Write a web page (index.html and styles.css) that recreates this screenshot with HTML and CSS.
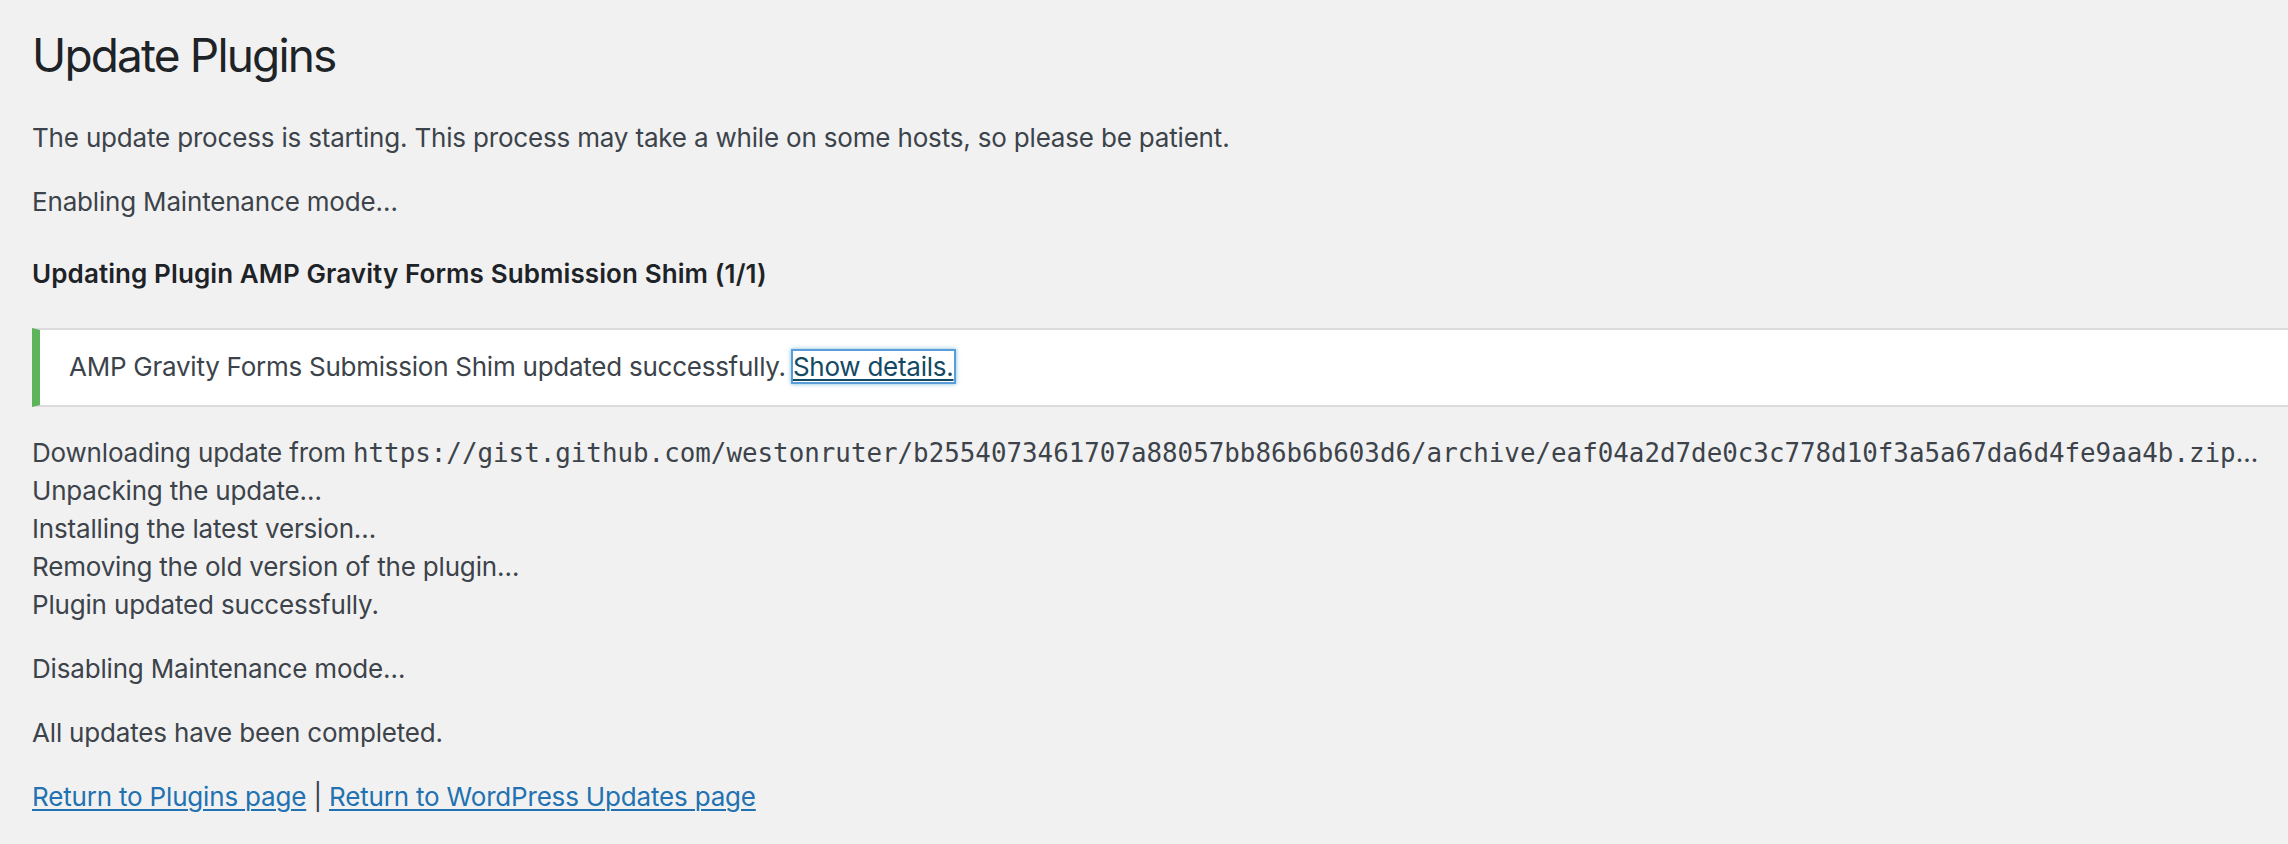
FILE: index.html
```html
<!DOCTYPE html>
<html lang="en">
<head>
  <meta charset="UTF-8">
  <meta name="viewport" content="width=device-width, initial-scale=1.0">
  <title>Update Plugins</title>
  <link rel="stylesheet" href="styles.css">
</head>
<body>
  <div class="wrap">
    <h1>Update Plugins</h1>
    <p>The update process is starting. This process may take a while on some hosts, so please be patient.</p>

    <p>Enabling Maintenance mode&hellip;</p>
    <h2 class="update-title">Updating Plugin AMP Gravity Forms Submission Shim (1/1)</h2>

    <div class="notice notice-success">
      <p>AMP Gravity Forms Submission Shim updated successfully. <a href="#" class="details-link">Show details.</a></p>
    </div>

    <div class="update-log">
      <p>Downloading update from <span class="url">https://gist.github.com/westonruter/b2554073461707a88057bb86b6b603d6/archive/eaf04a2d7de0c3c778d10f3a5a67da6d4fe9aa4b.zip</span>&hellip;</p>
      <p>Unpacking the update&hellip;</p>
      <p>Installing the latest version&hellip;</p>
      <p>Removing the old version of the plugin&hellip;</p>
      <p>Plugin updated successfully.</p>
    </div>

    <p>Disabling Maintenance mode&hellip;</p>
    <p>All updates have been completed.</p>
    <p><a href="#">Return to Plugins page</a> | <a href="#">Return to WordPress Updates page</a></p>
  </div>
</body>
</html>
```

FILE: styles.css
```css
html, body {
  background-color: #f1f1f1;
}
body {
  margin: 0;
  overflow-x: hidden;
  font-family: Inter, "Noto Sans", sans-serif;
  font-size: 26px;
  line-height: 38px;
  letter-spacing: -0.18px;
  color: #3c434a;
}
.wrap {
  padding: 7px 0 0 32px;
}
h1 {
  font-size: 46px;
  font-weight: 400;
  line-height: 60px;
  letter-spacing: -0.04em;
  margin: 0;
  padding: 18px 0 8px;
  color: #1d2327;
}
p {
  margin: 26px 0;
}
a {
  color: #2271b1;
  text-decoration: underline;
  text-decoration-thickness: 2px;
  text-underline-offset: 3px;
}
.update-title {
  font-size: 26px;
  font-weight: 600;
  line-height: 38px;
  letter-spacing: 0.1px;
  margin: 34px 0 35px;
  color: #1d2327;
}
.notice {
  background: #fff;
  border: 2px solid #dcdcde;
  border-left: 8px solid #5db45a;
  border-right: 0;
  padding: 1px 29px 2px;
  margin: 0 0 27px;
}
.notice p {
  margin: 13px 0;
  padding: 4px 0;
  letter-spacing: -0.25px;
}
.details-link {
  color: #124964;
  box-shadow: 0 0 0 2px #5b9dd9, 0 0 4px 2px rgba(30, 140, 190, 0.6);
}
.update-log p {
  margin: 0;
  white-space: nowrap;
}
.update-log + p {
  margin-top: 26px;
}
.url {
  font-family: "DejaVu Sans Mono", monospace;
  font-size: 25.85px;
  letter-spacing: 0;
}
```
